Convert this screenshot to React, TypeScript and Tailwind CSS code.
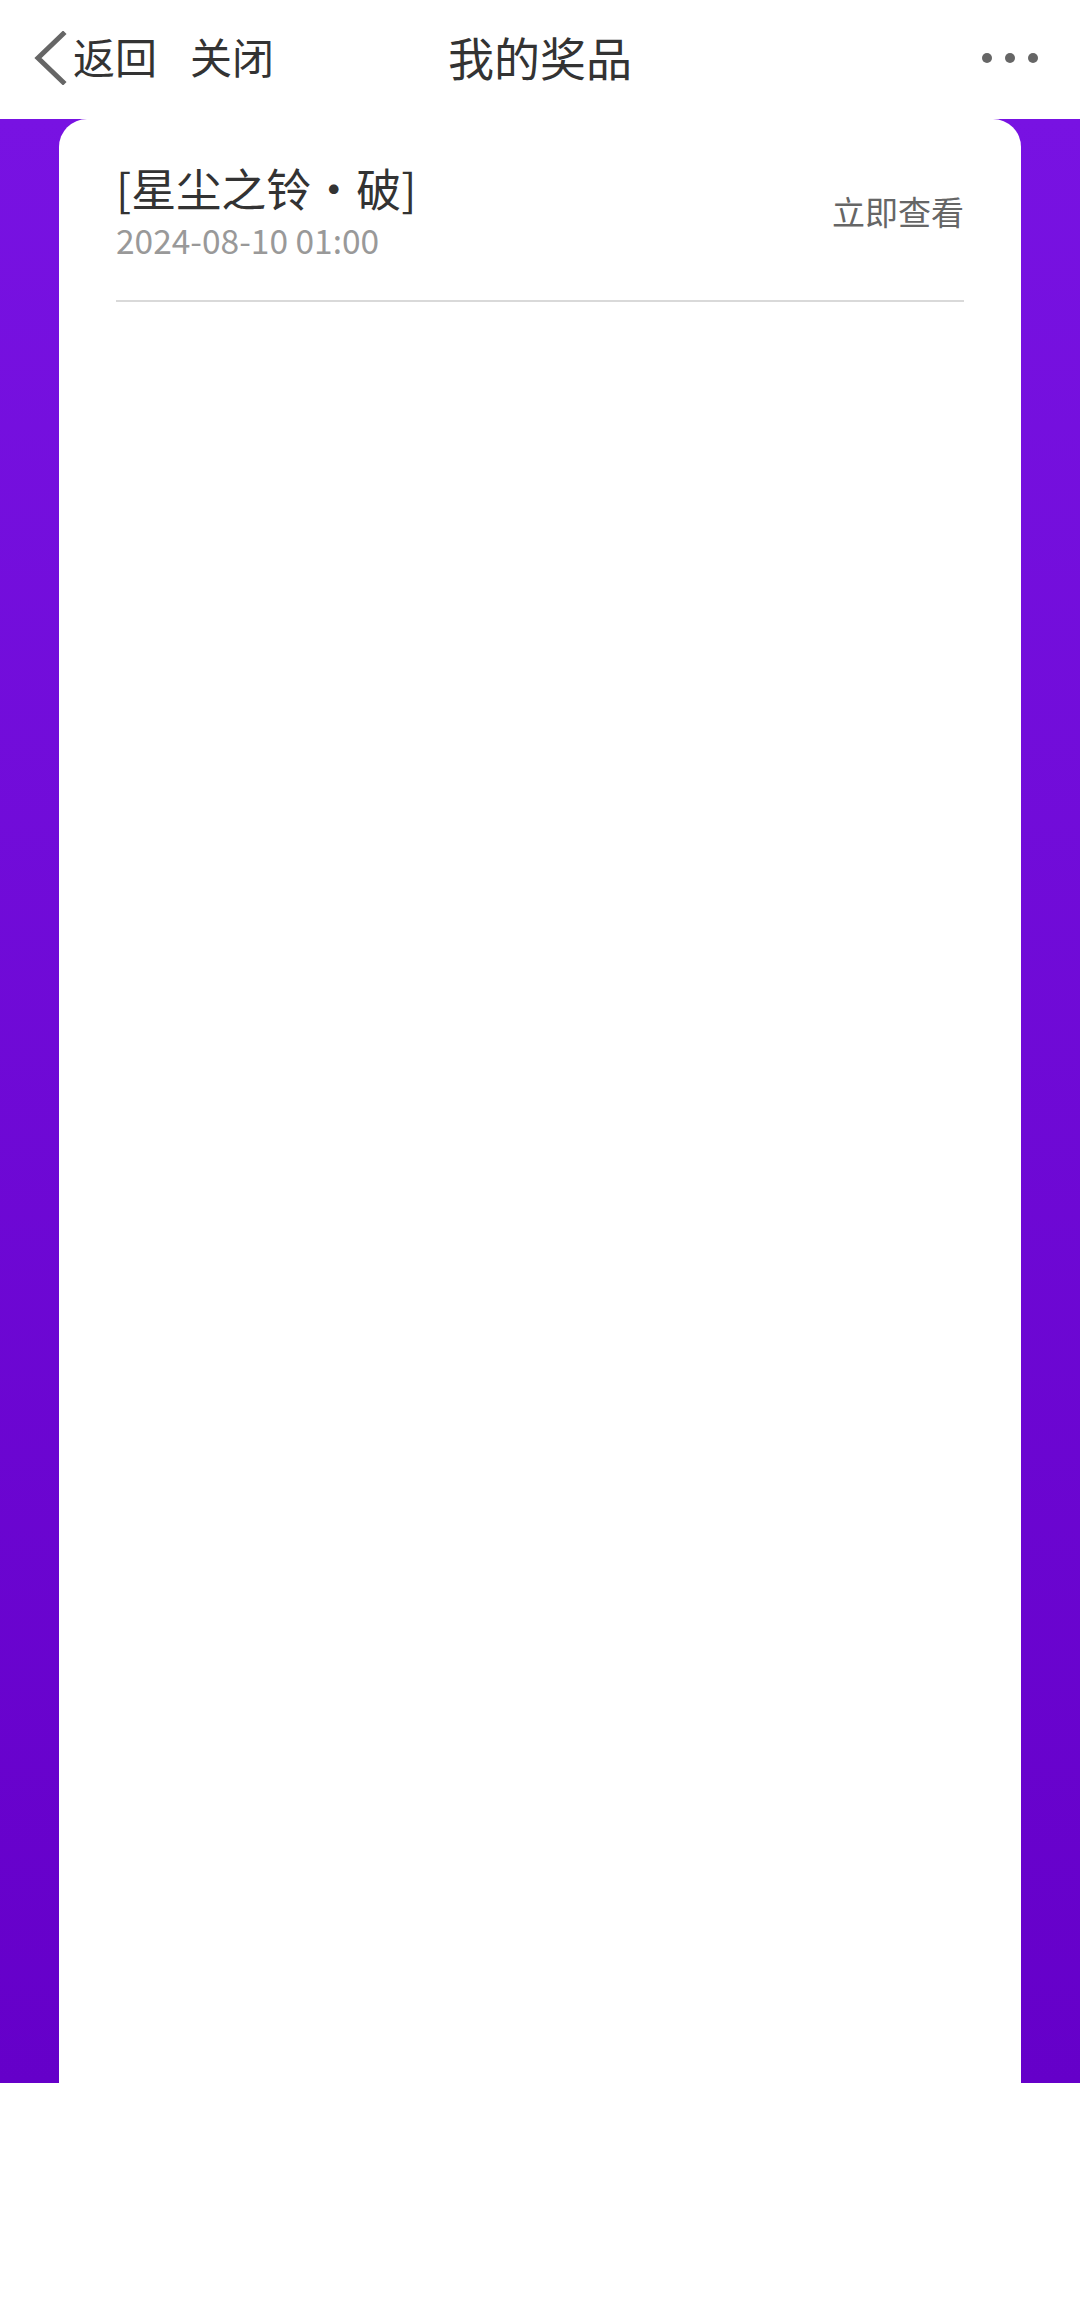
const cjk = { fontFamily: '"Noto Sans CJK SC", "Noto Sans", sans-serif' };

const BackIcon = () => (
  <svg width="34" height="54" viewBox="0 0 34 54" className="shrink-0">
    <path d="M30 3 L5 27 L30 51" fill="none" stroke="#666" strokeWidth="5" strokeLinecap="square" strokeLinejoin="miter" />
  </svg>
);

const Header = () => (
  <div className="grid grid-cols-3 items-center h-[119px] bg-white">
    <div className="flex items-center pl-[33px] mb-[4px]">
      <BackIcon />
      <span className="ml-[6px] -mt-[4px] text-[42px] leading-none text-[#333]">返回</span>
      <span className="ml-[33px] -mt-[4px] text-[42px] leading-none text-[#333]">关闭</span>
    </div>
    <div className="text-center text-[46px] leading-none text-[#333] mb-[8px]">我的奖品</div>
    <div className="flex justify-end items-center gap-[13px] pr-[42px] -mt-[3px]">
      <span className="w-[10px] h-[10px] rounded-full bg-[#666]" />
      <span className="w-[10px] h-[10px] rounded-full bg-[#666]" />
      <span className="w-[10px] h-[10px] rounded-full bg-[#666]" />
    </div>
  </div>
);

const PrizeRow = ({ name, time }: { name: string; time: string }) => (
  <div>
    <div className="flex items-center justify-between">
      <div>
        <div className="text-[45px] leading-[56px] text-[#333]">{name}</div>
        <div className="mt-[2px] text-[33.5px] leading-[44px] text-[#999]">{time}</div>
      </div>
      <button className="text-[33px] leading-[44px] text-[#666]">立即查看</button>
    </div>
    <div className="mt-[38px] h-[2px] bg-[#d9d9d9]" />
  </div>
);

export default function App() {
  return (
    <div className="w-[1080px] h-[2302px] bg-white" style={cjk}>
      <Header />
      <div className="h-[1964px] bg-gradient-to-b from-[#7812e2] to-[#6500c9] px-[59px]">
        <div className="h-full bg-white rounded-t-[28px] px-[57px] pt-[41px]">
          <PrizeRow name="[星尘之铃・破]" time="2024-08-10 01:00" />
        </div>
      </div>
    </div>
  );
}
